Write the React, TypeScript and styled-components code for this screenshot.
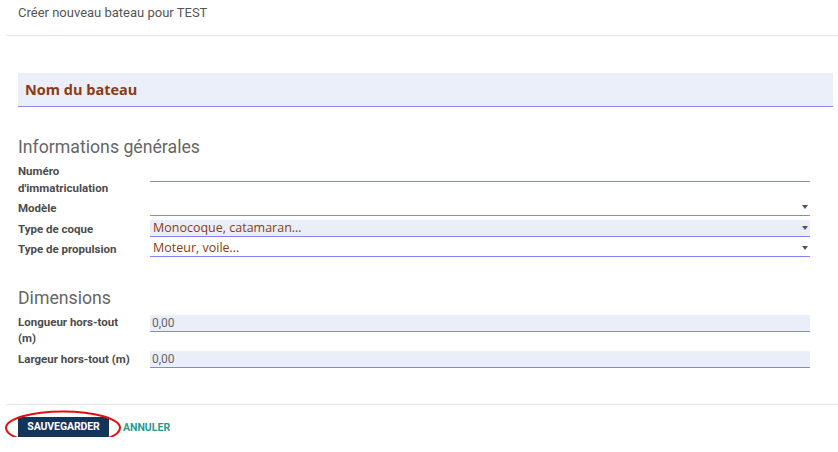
import { createGlobalStyle } from "styled-components";
import styled from "styled-components";

const GlobalStyle = createGlobalStyle`
  html, body {
    margin: 0;
    padding: 0;
    background: #fff;
  }
  body {
    font-family: Roboto, "Liberation Sans", sans-serif;
    color: #4c4c4c;
  }
`;

const Page = styled.div`
  width: 838px;
  padding-left: 6px;
  box-sizing: border-box;
`;

const ControlPanel = styled.div`
  height: 36px;
  padding: 5px 12px 0;
  box-sizing: border-box;
  border-bottom: 1px solid #e6e6e6;
  font-size: 13px;
  line-height: 16px;
  color: #555;
`;

const Sheet = styled.div`
  padding: 37px 5px 0 12px;
`;

const NameBand = styled.div`
  height: 34px;
  box-sizing: border-box;
  padding: 0 7px;
  background: #ebeff9;
  border-bottom: 1px solid #8a8af0;
  font-family: "Open Sans", "Noto Sans", sans-serif;
  font-weight: 700;
  font-size: 14.5px;
  line-height: 33px;
  color: #8a3b12;
`;

const SectionTitle = styled.div<{ $top: number }>`
  margin: ${(p) => p.$top}px 0 3px;
  font-size: 17.7px;
  line-height: 22px;
  color: #666;
`;

const Row = styled.div`
  display: grid;
  grid-template-columns: 132px 660px;
  align-items: start;
`;

const Label = styled.div`
  padding: 2px 0;
  font-size: 11.5px;
  font-weight: 700;
  line-height: 16.5px;
  color: #4c4c4c;
`;

const Field = styled.div<{ $filled?: boolean; $offset?: number }>`
  display: flex;
  align-items: center;
  justify-content: space-between;
  height: 17px;
  margin-top: ${(p) => p.$offset ?? 1}px;
  padding: 0 2px 0 3px;
  box-sizing: border-box;
  background: ${(p) => (p.$filled ? "#eaeef9" : "transparent")};
  border-bottom: 1px solid #8282f2;
`;

const Placeholder = styled.span`
  font-family: "Open Sans", "Noto Sans", sans-serif;
  font-size: 12.5px;
  line-height: 16px;
  color: #8a3b12;
`;

const Amount = styled.span`
  font-size: 12px;
  line-height: 16px;
  color: #666;
  margin-left: -1px;
`;

const Caret = styled.span`
  width: 0;
  height: 0;
  margin-left: auto;
  border-left: 3.5px solid transparent;
  border-right: 3.5px solid transparent;
  border-top: 4px solid #555;
`;

const Footer = styled.div`
  margin-top: 35px;
  border-top: 1px solid #e6e6e6;
  padding: 12px 12px 0;
  display: flex;
  align-items: center;
  gap: 14px;
`;

const SaveWrap = styled.div`
  position: relative;
  display: flex;
`;

const SaveButton = styled.button`
  height: 20px;
  width: 91px;
  padding: 0;
  border: none;
  background: #15345a;
  color: #fff;
  font-family: Roboto, "Liberation Sans", sans-serif;
  font-weight: 700;
  font-size: 10.5px;
  line-height: 20px;
  letter-spacing: -0.1px;
  cursor: pointer;
`;

const Mark = styled.svg`
  position: absolute;
  left: -14px;
  top: -7px;
  width: 118px;
  height: 36px;
  pointer-events: none;
`;

const CancelLink = styled.a`
  font-weight: 700;
  font-size: 10.5px;
  color: #1f9d8e;
  cursor: pointer;
`;

function App() {
  return (
    <Page>
      <GlobalStyle />
      <ControlPanel>Créer nouveau bateau pour TEST</ControlPanel>
      <Sheet>
        <NameBand>Nom du bateau</NameBand>

        <SectionTitle $top={29}>Informations générales</SectionTitle>
        <Row>
          <Label>
            Numéro
            <br />
            d'immatriculation
          </Label>
          <Field $offset={4} />
        </Row>
        <Row>
          <Label>Modèle</Label>
          <Field $offset={0.5}>
            <Caret />
          </Field>
        </Row>
        <Row>
          <Label>Type de coque</Label>
          <Field $filled>
            <Placeholder>Monocoque, catamaran…</Placeholder>
            <Caret />
          </Field>
        </Row>
        <Row>
          <Label>Type de propulsion</Label>
          <Field>
            <Placeholder>Moteur, voile…</Placeholder>
            <Caret />
          </Field>
        </Row>

        <SectionTitle $top={27}>Dimensions</SectionTitle>
        <Row>
          <Label>
            Longueur hors-tout
            <br />
            (m)
          </Label>
          <Field $filled $offset={3}>
            <Amount>0,00</Amount>
          </Field>
        </Row>
        <Row>
          <Label>Largeur hors-tout (m)</Label>
          <Field $filled $offset={2}>
            <Amount>0,00</Amount>
          </Field>
        </Row>
      </Sheet>
      <Footer>
        <SaveWrap>
          <SaveButton>SAUVEGARDER</SaveButton>
          <Mark viewBox="0 0 118 36">
            <ellipse
              cx="59"
              cy="18"
              rx="57"
              ry="16.5"
              fill="none"
              stroke="#e01010"
              strokeWidth="2"
            />
          </Mark>
        </SaveWrap>
        <CancelLink>ANNULER</CancelLink>
      </Footer>
    </Page>
  );
}

export default App;
